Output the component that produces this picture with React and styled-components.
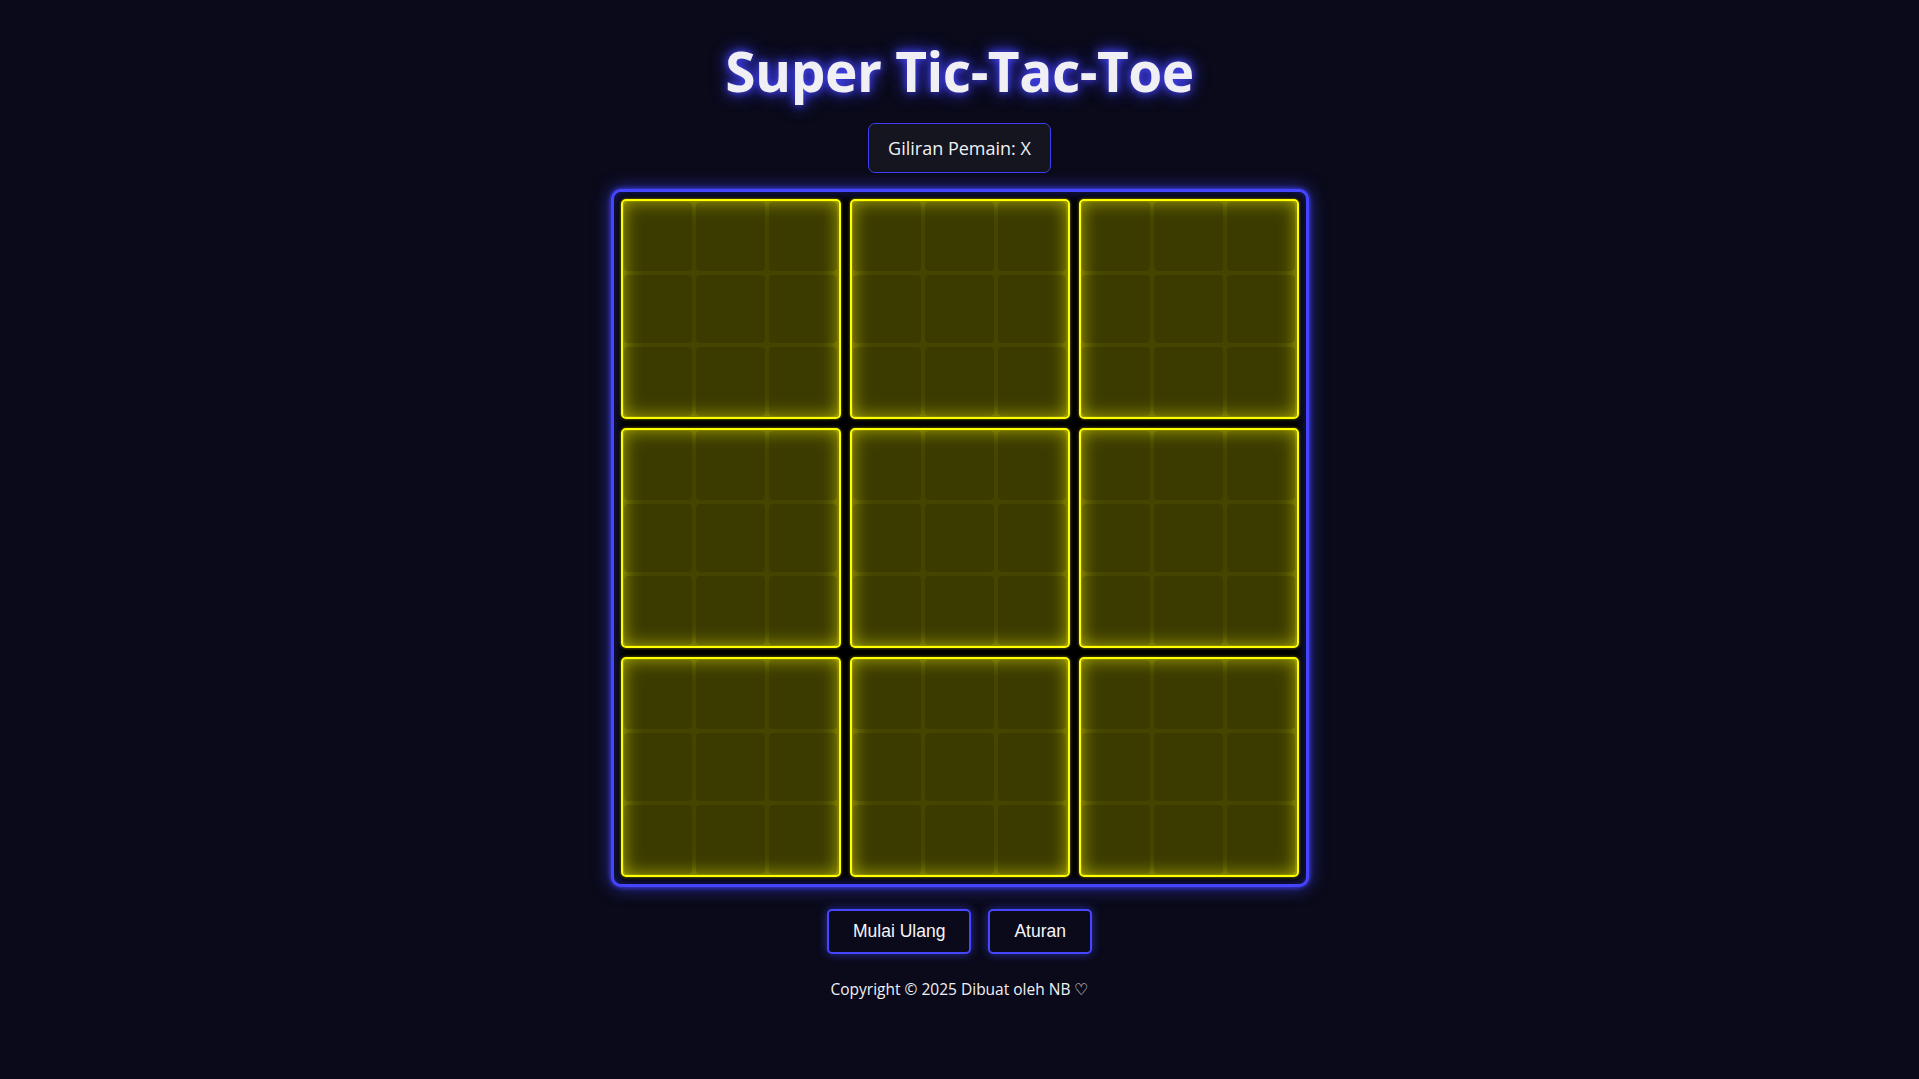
import React from 'react';
import styled, { createGlobalStyle } from 'styled-components';

const GlobalStyle = createGlobalStyle`
  body {
    margin: 0;
    background: #0a0a1a;
    color: #f0f0f6;
    font-family: "Open Sans", "Noto Sans", sans-serif;
  }
`;

const Page = styled.div`
  min-height: 100vh;
  display: flex;
  flex-direction: column;
  align-items: center;
  padding-top: 38px;
  box-sizing: border-box;
`;

const Title = styled.h1`
  margin: 0;
  font-size: 55px;
  font-weight: 700;
  line-height: 1.2;
  color: #f0f0f4;
  letter-spacing: -0.5px;
  text-shadow: 0 0 8px #4a4aff, 0 0 18px #3b3bff;
`;

const Turn = styled.div`
  margin-top: 19px;
  padding: 12px 19px;
  font-size: 18px;
  color: #f0f0f4;
  background: #15151f;
  border: 1px solid #3e3ef0;
  border-radius: 7px;
`;

const Board = styled.div`
  margin-top: 16px;
  display: grid;
  grid-template-columns: repeat(3, 220px);
  grid-template-rows: repeat(3, 220px);
  gap: 9px;
  padding: 7px;
  background: #000;
  border: 3px solid #4545ff;
  border-radius: 10px;
  box-shadow: 0 0 18px rgba(69, 69, 255, 0.65), 0 0 5px #4545ff,
    inset 0 0 14px rgba(69, 69, 255, 0.45);
`;

const SubBoard = styled.div`
  display: grid;
  grid-template-columns: repeat(3, 1fr);
  grid-template-rows: repeat(3, 1fr);
  gap: 4px;
  padding: 1px;
  background: rgba(255, 255, 0, 0.27);
  border: 2px solid #ffff00;
  border-radius: 5px;
  box-shadow: 0 0 3px rgba(255, 255, 0, 0.5), inset 0 0 18px rgba(255, 255, 0, 0.7);
`;

const Cell = styled.div`
  border-radius: 4px;
  background: rgba(0, 0, 0, 0.14);
  cursor: pointer;
`;

const Actions = styled.div`
  margin-top: 22px;
  display: flex;
  gap: 17px;
`;

const Button = styled.button`
  font-family: "Liberation Sans", Arial, sans-serif;
  font-size: 17.5px;
  color: #f6f6fa;
  background: #0a0a1a;
  border: 2px solid #4646ff;
  border-radius: 5px;
  padding: 10px 24px;
  box-shadow: 0 0 10px rgba(70, 70, 255, 0.6);
  cursor: pointer;
`;

const Footer = styled.footer`
  margin-top: 24px;
  font-size: 15.5px;
  color: #f0f0f6;
`;

export default function App() {
  const boards = Array.from({ length: 9 });
  return (
    <>
      <GlobalStyle />
      <Page>
        <Title>Super Tic-Tac-Toe</Title>
        <Turn>Giliran Pemain: X</Turn>
        <Board>
          {boards.map((_, b) => (
            <SubBoard key={b}>
              {boards.map((_, c) => (
                <Cell key={c} />
              ))}
            </SubBoard>
          ))}
        </Board>
        <Actions>
          <Button>Mulai Ulang</Button>
          <Button>Aturan</Button>
        </Actions>
        <Footer>Copyright © 2025 Dibuat oleh NB ♡</Footer>
      </Page>
    </>
  );
}
